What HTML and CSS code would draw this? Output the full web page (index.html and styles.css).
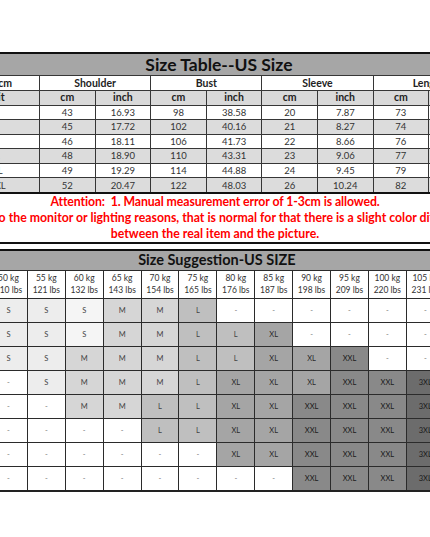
FILE: index.html
```html
<!DOCTYPE html>
<html lang="en">
<head>
<meta charset="utf-8">
<title>Size Chart</title>
<link rel="stylesheet" href="styles.css">
</head>
<body>
<main class="page">
  <table class="size-table">
    <colgroup><col class="c-size"><col class="c-val"><col class="c-val"><col class="c-val"><col class="c-val"><col class="c-val"><col class="c-val"><col class="c-val"><col class="c-val"></colgroup>
    <thead>
      <tr class="title"><th colspan="9">Size Table--US Size</th></tr>
      <tr class="h1"><th class="first">Size cm</th><th colspan="2">Shoulder</th><th colspan="2">Bust</th><th colspan="2">Sleeve</th><th colspan="2">Length</th></tr>
      <tr class="h2"><th class="first">Unit</th><th>cm</th><th>inch</th><th>cm</th><th>inch</th><th>cm</th><th>inch</th><th>cm</th><th>inch</th></tr>
    </thead>
    <tbody>
      <tr><td class="first">S</td><td>43</td><td>16.93</td><td>98</td><td>38.58</td><td>20</td><td>7.87</td><td>73</td><td>28.74</td></tr>
      <tr><td class="first">M</td><td>45</td><td>17.72</td><td>102</td><td>40.16</td><td>21</td><td>8.27</td><td>74</td><td>29.13</td></tr>
      <tr><td class="first">L</td><td>46</td><td>18.11</td><td>106</td><td>41.73</td><td>22</td><td>8.66</td><td>76</td><td>29.92</td></tr>
      <tr><td class="first">XL</td><td>48</td><td>18.90</td><td>110</td><td>43.31</td><td>23</td><td>9.06</td><td>77</td><td>30.31</td></tr>
      <tr><td class="first">XXL</td><td>49</td><td>19.29</td><td>114</td><td>44.88</td><td>24</td><td>9.45</td><td>79</td><td>31.10</td></tr>
      <tr><td class="first">XXXL</td><td>52</td><td>20.47</td><td>122</td><td>48.03</td><td>26</td><td>10.24</td><td>82</td><td>32.28</td></tr>
    </tbody>
  </table>

  <div class="note">
    <p class="lead">Attention:&nbsp; 1. Manual measurement error of 1-3cm is allowed.</p>
    <p>2. Due to the monitor or lighting reasons, that is normal for that there is a slight color difference</p>
    <p>between the real item and the picture.</p>
  </div>
  <div class="rule"></div>

  <table class="suggest">
    <colgroup><col class="c-w"><col class="c-w"><col class="c-w"><col class="c-w"><col class="c-w"><col class="c-w"><col class="c-w"><col class="c-w"><col class="c-w"><col class="c-w"><col class="c-w"><col class="c-w"></colgroup>
    <thead>
      <tr class="title"><th colspan="12">Size Suggestion-US SIZE</th></tr>
      <tr class="head">
        <th>50 kg<br>110 lbs</th><th>55 kg<br>121 lbs</th><th>60 kg<br>132 lbs</th><th>65 kg<br>143 lbs</th><th>70 kg<br>154 lbs</th><th>75 kg<br>165 lbs</th><th>80 kg<br>176 lbs</th><th>85 kg<br>187 lbs</th><th>90 kg<br>198 lbs</th><th>95 kg<br>209 lbs</th><th>100 kg<br>220 lbs</th><th>105 kg<br>231 lbs</th>
      </tr>
    </thead>
    <tbody>
      <tr><td class="s">S</td><td class="s">S</td><td class="s s-lt">S</td><td class="m">M</td><td class="m">M</td><td class="l">L</td><td class="n">-</td><td class="n">-</td><td class="n">-</td><td class="n">-</td><td class="n">-</td><td class="n">-</td></tr>
      <tr><td class="s">S</td><td class="s">S</td><td class="s s-lt">S</td><td class="m">M</td><td class="m">M</td><td class="l">L</td><td class="l">L</td><td class="xl">XL</td><td class="n">-</td><td class="n">-</td><td class="n">-</td><td class="n">-</td></tr>
      <tr><td class="s">S</td><td class="s">S</td><td class="m">M</td><td class="m">M</td><td class="m">M</td><td class="l">L</td><td class="l">L</td><td class="xl">XL</td><td class="xl">XL</td><td class="xxl">XXL</td><td class="n">-</td><td class="n">-</td></tr>
      <tr><td class="n">-</td><td class="s">S</td><td class="m">M</td><td class="m">M</td><td class="m">M</td><td class="l">L</td><td class="xl">XL</td><td class="xl">XL</td><td class="xl">XL</td><td class="xxl">XXL</td><td class="xxl">XXL</td><td class="x3">3XL</td></tr>
      <tr><td class="n">-</td><td class="n">-</td><td class="m">M</td><td class="m">M</td><td class="l">L</td><td class="l">L</td><td class="xl">XL</td><td class="xl">XL</td><td class="xxl">XXL</td><td class="xxl">XXL</td><td class="xxl">XXL</td><td class="x3">3XL</td></tr>
      <tr><td class="n">-</td><td class="n">-</td><td class="n">-</td><td class="n">-</td><td class="l">L</td><td class="l">L</td><td class="xl">XL</td><td class="xl">XL</td><td class="xxl">XXL</td><td class="xxl">XXL</td><td class="xxl">XXL</td><td class="x3">3XL</td></tr>
      <tr><td class="n">-</td><td class="n">-</td><td class="n">-</td><td class="n">-</td><td class="n">-</td><td class="n">-</td><td class="xl">XL</td><td class="xl">XL</td><td class="xxl">XXL</td><td class="xxl">XXL</td><td class="xxl">XXL</td><td class="x3">3XL</td></tr>
      <tr><td class="n">-</td><td class="n">-</td><td class="n">-</td><td class="n">-</td><td class="n">-</td><td class="n">-</td><td class="n">-</td><td class="n">-</td><td class="xxl">XXL</td><td class="xxl">XXL</td><td class="xxl">XXL</td><td class="x3">3XL</td></tr>
    </tbody>
  </table>
</main>
</body>
</html>
```

FILE: styles.css
```css
html, body {
  margin: 0;
  padding: 0;
  background: #ffffff;
}

body {
  width: 430px;
  height: 537px;
  overflow: hidden;
  font-family: Lato, "Open Sans", "DejaVu Sans", sans-serif;
  color: #222;
}

.page {
  width: 430px;
  padding-top: 52px;
  overflow: hidden;
}

/* ---------- Size table ---------- */
.size-table {
  border-collapse: collapse;
  table-layout: fixed;
  width: 531px;
  margin-left: -47px;
}

.size-table .c-size { width: 86px; }
.size-table .c-val { width: 55.6px; }

.size-table th,
.size-table td {
  border: 1px solid #363636;
  padding: 0;
  text-align: center;
  vertical-align: middle;
  white-space: nowrap;
  overflow: hidden;
}

.size-table .first {
  padding-right: 4px;
}

.size-table tbody .first {
  padding-right: 5px;
}

.size-table .title th {
  background: #a6a6a6;
  border-top: 2px solid #111;
  height: 21px;
  font-size: 17.5px;
  font-weight: 700;
  color: #111;
  line-height: 1;
}

.size-table .h1 th {
  background: #fff;
  height: 13.5px;
  font-size: 10.5px;
  font-weight: 700;
  line-height: 1;
  color: #222;
}

.size-table .h2 th {
  background: #d9d9d9;
  height: 14px;
  font-size: 10.5px;
  font-weight: 700;
  line-height: 1;
  color: #222;
}

.size-table tbody td {
  height: 13.6px;
  font-size: 9.5px;
  line-height: 1;
  color: #333;
  background: #fff;
}

.size-table tbody tr:nth-child(even) td {
  background: #dcdcdc;
}

.size-table tbody tr:last-child td {
  border-bottom: 2px solid #111;
}

/* ---------- Notes ---------- */
.note {
  display: flex;
  flex-direction: column;
  align-items: center;
  color: #ff0000;
  font-weight: 700;
  font-size: 12.3px;
  line-height: 16px;
  white-space: nowrap;
}

.note p {
  margin: 0;
}

.note .lead {
  letter-spacing: -0.1px;
}

.rule {
  height: 2px;
  background: #111;
}

/* ---------- Suggestion table ---------- */
.suggest {
  border-collapse: collapse;
  table-layout: fixed;
  width: 455px;
  margin-top: 5px;
  margin-left: -11px;
}

.suggest .c-w { width: 37.9px; }

.suggest th,
.suggest td {
  border: 1px solid #2b2b2b;
  padding: 0;
  text-align: center;
  vertical-align: middle;
  white-space: nowrap;
  overflow: hidden;
}

.suggest .title th {
  background: #a6a6a6;
  border-top: 2px solid #111;
  height: 19px;
  font-size: 14.5px;
  font-weight: 700;
  color: #111;
  line-height: 1;
}

.suggest .head th {
  background: #fff;
  height: 27px;
  font-size: 8.5px;
  font-weight: 400;
  line-height: 11.5px;
  color: #333;
}

.suggest tbody td {
  height: 23px;
  font-size: 7.5px;
  line-height: 1;
  color: #444;
}

.suggest tbody tr:last-child td {
  border-bottom: 2px solid #222;
}

.suggest .n { background: #ffffff; color: #777; }
.suggest .s { background: #ededed; }
.suggest .s-lt { background: #f5f5f5; }
.suggest .m { background: #d6d6d6; }
.suggest .l { background: #bfbfbf; }
.suggest .xl { background: #a5a5a5; color: #2a2a2a; }
.suggest .xxl { background: #898989; color: #1a1a1a; }
.suggest .x3 { background: #6c6c6c; color: #1a1a1a; }
```
